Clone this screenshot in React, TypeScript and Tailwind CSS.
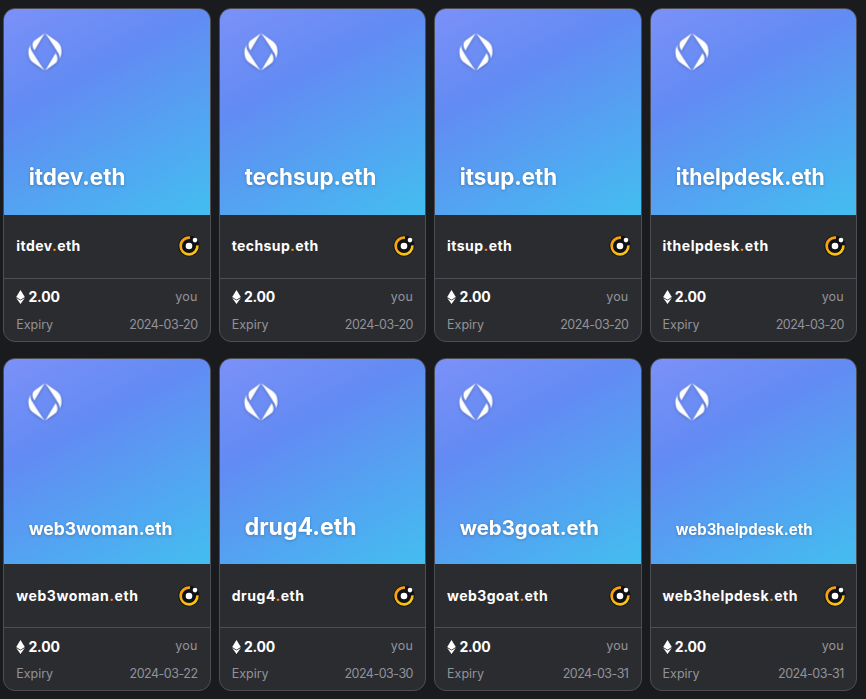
import clsx from "clsx";

type Domain = {
    name: string;
    expiry: string;
    fontSize: number;
    textWidth: number;
    tracking: string;
};

const domains: Domain[] = [
    { name: "itdev", expiry: "2024-03-20", fontSize: 30.5, textWidth: 126.4, tracking: "tracking-[0.46px]" },
    { name: "techsup", expiry: "2024-03-20", fontSize: 30.5, textWidth: 172.2, tracking: "tracking-[0.4px]" },
    { name: "itsup", expiry: "2024-03-20", fontSize: 30.5, textWidth: 127.4, tracking: "tracking-[0.45px]" },
    { name: "ithelpdesk", expiry: "2024-03-20", fontSize: 29.5, textWidth: 195, tracking: "tracking-[0.53px]" },
    { name: "web3woman", expiry: "2024-03-22", fontSize: 23, textWidth: 188, tracking: "tracking-[0.58px]" },
    { name: "drug4", expiry: "2024-03-30", fontSize: 31, textWidth: 146.3, tracking: "tracking-[0.55px]" },
    { name: "web3goat", expiry: "2024-03-31", fontSize: 26, textWidth: 182, tracking: "tracking-[0.45px]" },
    { name: "web3helpdesk", expiry: "2024-03-31", fontSize: 20, textWidth: 179, tracking: "tracking-[0.48px]" },
];

function EnsBanner({ domain }: { domain: Domain }) {
    const gradientId = `gradient-${domain.name}`;

    return (
        <svg
            viewBox="0 0 270 270"
            preserveAspectRatio="xMinYMin slice"
            className="block h-[205.5px] w-[calc(100%+1px)] max-w-none shrink-0"
        >
            <defs>
                <linearGradient id={gradientId} x1="190.5" y1="302" x2="-64" y2="-172.5" gradientUnits="userSpaceOnUse">
                    <stop stopColor="#44BCF0" />
                    <stop offset="0.428198" stopColor="#628BF3" />
                    <stop offset="1" stopColor="#A099FF" />
                </linearGradient>
            </defs>
            <rect width="270" height="270" fill={`url(#${gradientId})`} />
            <g fill="white" className="drop-shadow-[0_1px_2px_rgba(0,0,0,0.25)]">
                <g stroke="white" strokeWidth="0.15">
                    <EnsHalf />
                    <g transform="rotate(180 53.5 56)">
                        <EnsHalf />
                    </g>
                </g>
                <text
                    x="32.3"
                    y="230"
                    fontSize={domain.fontSize}
                    textLength={domain.textWidth}
                    lengthAdjust="spacingAndGlyphs"
                    className="font-[Inter,sans-serif] font-bold"
                >
                    {`${domain.name}.eth`}
                </text>
            </g>
        </svg>
    );
}

function EnsHalf() {
    return (
        <>
            <path d="M38.0397 51.0875C38.5012 52.0841 39.6435 54.0541 39.6435 54.0541L52.8484 32L39.9608 41.0921C39.1928 41.6096 38.5628 42.3102 38.1263 43.1319C37.5393 44.3716 37.2274 45.7259 37.2125 47.1C37.1977 48.4742 37.4802 49.8351 38.0397 51.0875Z" />
            <path d="M32.152 59.1672C32.3024 61.2771 32.9122 63.3312 33.9405 65.1919C34.9689 67.0527 36.3921 68.6772 38.1147 69.9567L52.8487 80C52.8487 80 43.6303 67.013 35.8549 54.0902C35.0677 52.6973 34.5385 51.1744 34.2926 49.5952C34.1838 48.8809 34.1838 48.1543 34.2926 47.44C34.0899 47.8098 33.6958 48.5665 33.6958 48.5665C32.9075 50.1566 32.3707 51.856 32.1041 53.605C31.9508 55.4561 31.9669 57.3171 32.152 59.1672Z" />
        </>
    );
}

function OrbitIcon() {
    return (
        <svg viewBox="0 0 22 22" className="size-[22px]">
            <defs>
                <linearGradient id="orbit" x1="4" y1="3" x2="17" y2="20" gradientUnits="userSpaceOnUse">
                    <stop stopColor="#f19a10" />
                    <stop offset="1" stopColor="#fbcb12" />
                </linearGradient>
            </defs>
            <circle cx="11" cy="11" r="10.6" fill="#111217" />
            <path d="M12 2.7A8.4 8.4 0 1 0 19.4 10.4" fill="none" stroke="url(#orbit)" strokeWidth="2.7" />
            <circle cx="11" cy="11" r="3.3" fill="white" />
            <circle cx="17" cy="5.1" r="2.3" fill="white" />
        </svg>
    );
}

function EthIcon() {
    return (
        <svg viewBox="0 0 9 14" className="w-[9px] h-[14px]" fill="white">
            <path d="M4.5 0L0.2 7.1L4.5 9.7L8.8 7.1Z" />
            <path d="M0.2 8.1L4.5 14L8.8 8.1L4.5 10.6Z" />
        </svg>
    );
}

function DomainCard({ domain }: { domain: Domain }) {
    return (
        <div className="h-[333.4px] overflow-hidden rounded-xl border border-[#4d4e54] bg-[#2b2c30]">
            <EnsBanner domain={domain} />
            <div className="flex h-16 items-center justify-between border-b border-[#4d4e54] pl-[11.8px] pr-2.5">
                <h3 className={clsx("text-sm font-bold text-white", domain.tracking)}>
                    {domain.name}
                    <span className="text-[#ff9d0a]">.</span>
                    eth
                </h3>
                <OrbitIcon />
            </div>
            <div className="flex flex-col gap-2 pl-[11.8px] pr-[12.3px] pt-[8.2px] text-[12.5px] text-[#929399]">
                <div className="flex h-5 items-center justify-between">
                    <span className="flex items-center gap-[3.3px] text-sm font-bold tracking-[-0.2px] text-white">
                        <EthIcon />
                        2.00
                    </span>
                    <span className="tracking-[0.2px]">you</span>
                </div>
                <div className="flex h-5 items-center justify-between">
                    <span>Expiry</span>
                    <span className="tracking-[-0.5px]">{domain.expiry}</span>
                </div>
            </div>
        </div>
    );
}

export default function App() {
    return (
        <div className="h-screen overflow-hidden bg-[#1a1b1f] pl-[3.4px] pr-[8.8px] pt-[8.45px] font-[Inter,sans-serif]">
            <div className="grid grid-cols-4 gap-x-2 gap-y-4">
                {domains.map((domain) => (
                    <DomainCard key={domain.name} domain={domain} />
                ))}
            </div>
        </div>
    );
}
